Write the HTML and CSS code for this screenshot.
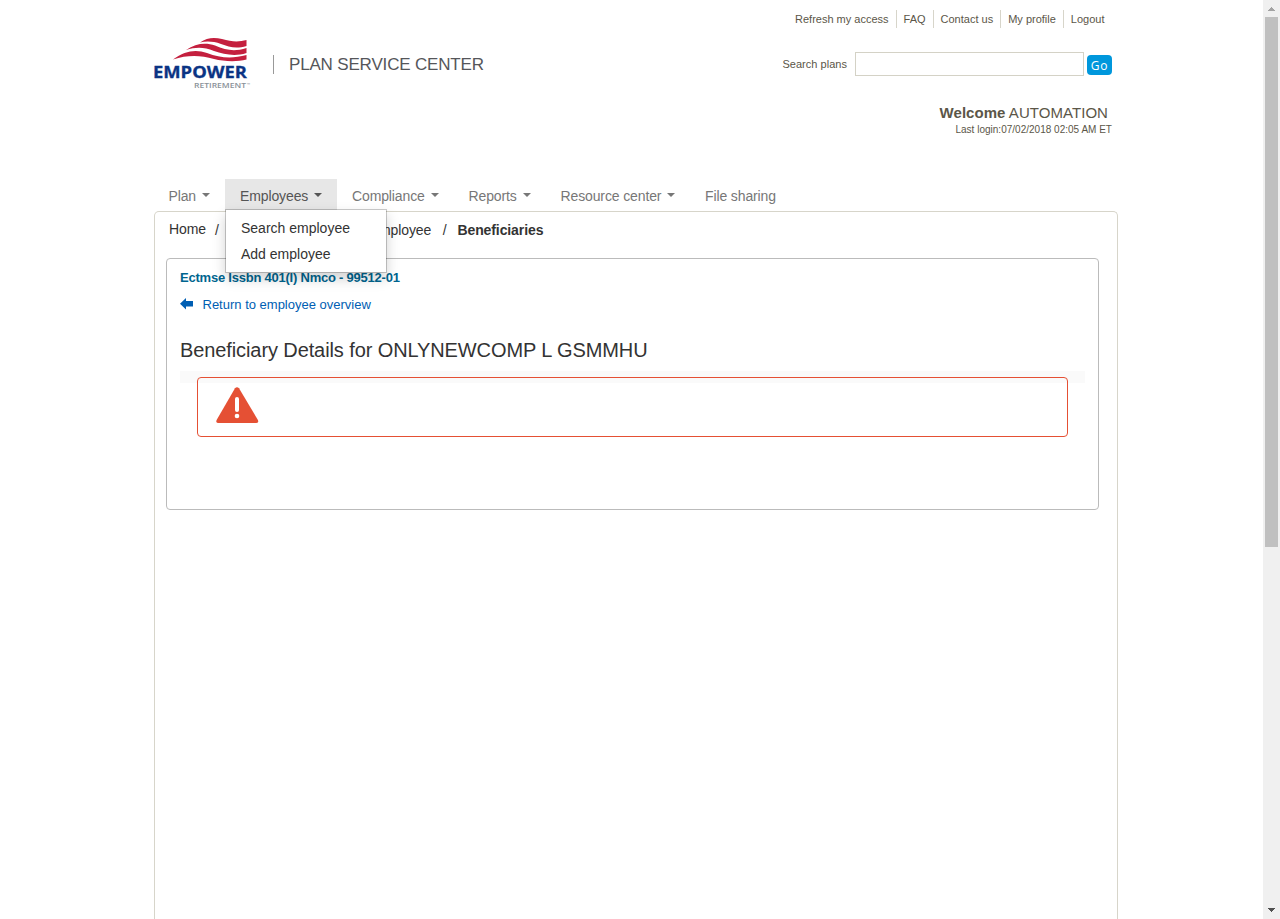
FILE: index.html
```html
<!DOCTYPE html>
<html lang="en">
<head>
<meta charset="utf-8">
<title>Plan Service Center</title>
<link rel="stylesheet" href="styles.css">
</head>
<body>
<div class="viewport">
  <div class="page">
    <header class="header">
      <div class="brand">
        <svg class="logo" width="100" height="54" viewBox="0 0 100 54">
          <g fill="#c41f3e">
            <path d="M46 5.5C53 .5 60 0 68 2C78 5 85 5 92.5 3V9C82 12 75 10 67 7C59 4 52 4 46 5.5Z"/>
            <path d="M32 13C42 6 52 5.500 61 8.500C72 13 80 15 92.500 11V16C80 20 70 17 60 14C50 10 42 10 32 13Z"/>
            <path d="M19 22.500C31 13.500 42 12 53 16C66 21 78 22 92.500 18V22.500C83 25 70 24.500 60 22C46 18 33 18 19 22.500Z"/>
          </g>
          <text class="logo-name" x="-1" y="41" textLength="94" lengthAdjust="spacingAndGlyphs">EMPOWER</text>
          <text class="logo-sub" x="40" y="50.5" textLength="52" lengthAdjust="spacingAndGlyphs">RETIREMENT</text>
          <text class="logo-tm" x="93" y="49">™</text>
        </svg>
        <span class="product">PLAN SERVICE CENTER</span>
      </div>
      <div class="tools">
        <nav class="links"><a>Refresh my access</a><a>FAQ</a><a>Contact us</a><a>My profile</a><a>Logout</a></nav>
        <form class="search"><label for="q">Search plans</label><input id="q" type="text"><button type="button">Go</button></form>
        <p class="welcome"><b>Welcome</b> AUTOMATION</p>
        <p class="login">Last login:07/02/2018 02:05 AM ET</p>
      </div>
    </header>
    <nav class="menu">
      <a class="item plan">Plan<i class="caret"></i></a>
      <div class="item employees open">Employees<i class="caret"></i>
        <div class="dropdown"><a>Search employee</a><a>Add employee</a></div>
      </div>
      <a class="item compliance">Compliance<i class="caret"></i></a>
      <a class="item reports">Reports<i class="caret"></i></a>
      <a class="item resource">Resource center<i class="caret"></i></a>
      <a class="item">File sharing</a>
    </nav>
    <main class="content">
      <div class="crumbs"><a class="home">Home</a><span class="sep">/</span><a class="parent">employee</a><span class="sep last">/</span><b>Beneficiaries</b></div>
      <section class="panel">
        <div class="plan-name">Ectmse Issbn 401(I) Nmco - 99512-01</div>
        <a class="back"><svg width="13" height="12" viewBox="0 0 13 12"><path d="M0 5.7L6 0V3H13V8.6H6V11.5Z" fill="#005eb3"/></svg><span>Return to employee overview</span></a>
        <h1>Beneficiary Details for ONLYNEWCOMP L GSMMHU</h1>
        <div class="strip">
          <div class="alert">
            <svg width="43" height="37" viewBox="0 0 43 37"><path d="M19 1.300Q21 -1 23 1.300L41.900 33Q43 36 40 36H2.500Q-.5 36 .6 33Z" fill="#e55034"/><path d="M21 12V23" stroke="#fff" stroke-width="4" stroke-linecap="round"/><circle cx="21" cy="29" r="2.300" fill="#fff"/></svg>
          </div>
        </div>
      </section>
    </main>
  </div>
  <div class="scrollbar">
    <svg class="up" width="17" height="17" viewBox="0 0 17 17" shape-rendering="crispEdges"><path d="M5 11V10H6V9H7V8H8V7H9V8H10V9H11V10H12V11Z" fill="#a3a3a3"/></svg>
    <div class="thumb"></div>
    <svg class="down" width="17" height="17" viewBox="0 0 17 17" shape-rendering="crispEdges"><path d="M5 6V7H6V8H7V9H8V10H9V9H10V8H11V7H12V6Z" fill="#505050"/></svg>
  </div>
</div>
</body>
</html>
```
FILE: styles.css
```css
* { box-sizing: border-box; }
body { margin: 0; background: #fff; color: #333; font: 14px/20px "Liberation Sans", Arial, sans-serif; overflow: hidden; }
p, h1 { margin: 0; }
.viewport { display: flex; height: 919px; overflow: hidden; }
.page { width: 964px; margin-left: 154px; display: flex; flex-direction: column; }
.header { height: 179px; display: flex; justify-content: space-between; }
.brand { display: flex; padding-top: 37px; }
.logo { display: block; overflow: visible; }
.logo-name { font: bold 15.8px "Open Sans", sans-serif; fill: #0b3484; stroke: #0b3484; stroke-width: .3px; }
.logo-sub { font: 600 7px "Open Sans", sans-serif; fill: #8a9299; }
.logo-tm { font: 4px "Open Sans", sans-serif; fill: #8a9299; }
.product { height: 19px; margin: 18px 0 0 19px; padding-left: 15px; border-left: 1px solid #999; font-size: 17px; line-height: 19px; letter-spacing: -.17px; color: #55565a; white-space: nowrap; }
.tools { width: 340px; display: flex; flex-direction: column; align-items: flex-end; padding: 10px 6px 0 0; color: #5b5648; }
.links { display: flex; font-size: 11px; line-height: 18px; white-space: nowrap; }
.links a { padding: 0 7px; border-left: 1px solid #d7d5ca; }
.links a:first-child { border-left: 0; }
.links a:last-child { padding-right: 7.5px; }
.search { display: flex; align-items: center; margin-top: 24px; font-size: 11px; line-height: 24px; }
.search label { letter-spacing: .03px; margin-right: 8px; }
.search input { width: 229px; height: 24px; padding: 0; border: 1px solid #d4d2c6; background: #fff; }
.search button { width: 25px; height: 20px; margin: 2px 0 0 3px; padding: 0; border: 0; border-radius: 4px; background: #0097dc; color: #fff; font: 12px/19px "Open Sans", sans-serif; letter-spacing: .8px; }
.welcome { margin: 27px 4px 0 0; font-size: 15px; line-height: 20px; letter-spacing: .05px; }
.login { font-size: 10px; line-height: 13px; letter-spacing: .01px; }
.menu { display: flex; height: 32px; color: #777; letter-spacing: -.12px; }
.item { position: relative; height: 32px; padding: 7px 15px 0; white-space: nowrap; }
.plan { width: 71px; padding-left: 14.5px; }
.employees { width: 112px; }
.compliance { width: 116.5px; }
.reports { width: 92px; }
.resource { width: 144.5px; }
.open { background: #e7e7e7; color: #555; }
.caret { display: inline-block; margin-left: 6px; vertical-align: middle; border: 4px solid transparent; border-top-color: currentColor; border-bottom: 0; transform: translateY(-2px); }
.dropdown { position: absolute; z-index: 2; left: 0; top: 30px; width: 162px; height: 64px; padding: 5px 0; border: 1px solid rgba(0,0,0,.2); background: #fff; background-clip: padding-box; box-shadow: 0 6px 12px rgba(0,0,0,.175); color: #333; letter-spacing: 0; }
.dropdown a { display: block; padding: 3px 15px; }
.content { flex: 1; padding: 8px 18px 0 11px; border: 1px solid #d7d5ca; border-bottom: 0; border-radius: 5px 5px 0 0; }
.crumbs { display: flex; height: 38px; padding-left: 3px; line-height: 20px; letter-spacing: -.1px; white-space: nowrap; }
.home { margin-top: -1px; }
.sep { margin: 0 11px 0 9px; }
.last { margin-left: 11.5px; }
.parent { margin-left: 141.5px; }
.panel { height: 252px; padding: 9px 13px; border: 1px solid #bbb; border-radius: 4px; }
.plan-name { font-size: 13px; font-weight: bold; line-height: 20px; letter-spacing: -.225px; color: #00658f; }
.back { display: flex; align-items: center; height: 20px; margin-top: 7px; gap: 9.5px; color: #005eb3; font-size: 13px; }
.back svg { margin-top: -2px; }
h1 { margin-top: 23px; font-size: 20px; line-height: 24px; font-weight: normal; letter-spacing: -.1px; color: #333; }
.strip { height: 12px; margin-top: 9px; padding: 6px 17px 0; background: #fafafa; }
.alert { height: 60px; padding: 9px 18px; border: 1px solid #e55034; border-radius: 4px; }
.alert svg { display: block; }
.scrollbar { width: 17px; height: 919px; margin-left: auto; background: #f0f0f0; display: flex; flex-direction: column; flex-shrink: 0; }
.thumb { width: 13px; height: 530px; margin-left: 2px; background: #c0c0c0; }
.down { margin-top: auto; }
```
